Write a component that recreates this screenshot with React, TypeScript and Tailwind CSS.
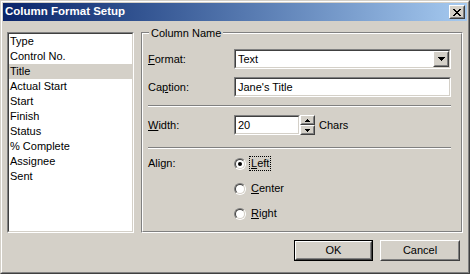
import React from 'react';

const items = ['Type', 'Control No.', 'Title', 'Actual Start', 'Start', 'Finish', 'Status', '% Complete', 'Assignee', 'Sent'];

const sunkenOuter = 'border border-t-[#808080] border-l-[#808080] border-b-white border-r-white';
const sunkenInner = 'border border-t-[#404040] border-l-[#404040] border-b-[#D4D0C8] border-r-[#D4D0C8]';
const raisedOuter = 'border border-t-white border-l-white border-b-[#404040] border-r-[#404040]';
const raisedInner = 'border border-t-[#D4D0C8] border-l-[#D4D0C8] border-b-[#808080] border-r-[#808080]';

const Field: React.FC<{ className?: string; children?: React.ReactNode }> = ({ className, children }) => (
  <div className={`${sunkenOuter} ${className || ''}`}>
    <div className={`${sunkenInner} bg-white h-full flex items-center`}>{children}</div>
  </div>
);

const RaisedBox: React.FC<{ className?: string; children?: React.ReactNode }> = ({ className, children }) => (
  <div className={`${raisedOuter} bg-[#D4D0C8] ${className || ''}`}>
    <div className={`${raisedInner} h-full flex items-center justify-center`}>{children}</div>
  </div>
);

const Separator = ({ className }: { className?: string }) => (
  <div className={`h-[2px] border-t border-t-[#808080] border-b border-b-white mr-[10px] ${className || ''}`} />
);

const Radio: React.FC<{ checked?: boolean; label: React.ReactNode; focused?: boolean }> = ({ checked, label, focused }) => (
  <div className="h-[25px] flex items-center">
    <div className="w-[12px] h-[12px] rounded-full border border-t-[#808080] border-l-[#808080] border-b-white border-r-white">
      <div className="w-full h-full rounded-full border border-t-[#404040] border-l-[#404040] border-b-[#D4D0C8] border-r-[#D4D0C8] bg-white flex items-center justify-center">
        {checked && <div className="w-[4px] h-[4px] rounded-full bg-black" />}
      </div>
    </div>
    <span className={`ml-[4px] px-[1px] leading-[13px] ${focused ? 'outline outline-1 outline-dotted outline-black' : ''}`}>{label}</span>
  </div>
);

export default function App() {
  return (
    <div
      className="w-[470px] h-[274px] bg-[#D4D0C8] border border-t-[#D4D0C8] border-l-[#D4D0C8] border-b-[#404040] border-r-[#404040] text-[11px] text-black select-none"
      style={{ fontFamily: '"Liberation Sans", Arial, sans-serif' }}
    >
      <div className="h-full border border-t-white border-l-white border-b-[#808080] border-r-[#808080] p-px flex flex-col">
        {/* Title bar */}
        <div className="h-[18px] bg-gradient-to-r from-[#0A246A] to-[#A6CAF0] flex items-center justify-between pl-[2px] pr-[2px]">
          <span className="text-white font-bold text-[11.5px] leading-none">Column Format Setup</span>
          <RaisedBox className="w-[16px] h-[14px]">
            <svg width="8" height="7" viewBox="0 0 8 7" shapeRendering="crispEdges">
              <path d="M0 0h2v1h-2zM6 0h2v1h-2zM1 1h2v1h-2zM5 1h2v1h-2zM2 2h4v1h-4zM3 3h2v1h-2zM2 4h4v1h-4zM1 5h2v1h-2zM5 5h2v1h-2zM0 6h2v1h-2zM6 6h2v1h-2z" fill="black" />
            </svg>
          </RaisedBox>
        </div>

        <div className="flex-1 flex flex-col px-[4px] pt-[11px]">
          <div className="flex gap-[7px] h-[201px]">
            {/* Field list */}
            <div className={`${sunkenOuter} w-[127px]`}>
              <div className={`${sunkenInner} bg-white h-full`}>
                {items.map((it) => (
                  <div key={it} className={`h-[15px] leading-[15px] pl-[1px] ${it === 'Title' ? 'bg-[#D4D0C8]' : ''}`}>
                    {it}
                  </div>
                ))}
              </div>
            </div>

            {/* Column name group */}
            <div className="flex-1 relative border border-t-[#808080] border-l-[#808080] border-b-white border-r-white">
              <div className="h-full border border-t-white border-l-white border-b-[#808080] border-r-[#808080] pl-[5px] flex flex-col">
                <span className="absolute left-[7px] top-[-6px] px-[2px] bg-[#D4D0C8] leading-[13px]">Column Name</span>

                <div className="mt-[15px] h-[20px] flex items-center">
                  <span className="w-[86px]"><span className="underline">F</span>ormat:</span>
                  <Field className="flex-1 mr-[10px] h-full">
                    <span className="flex-1 pl-[2px]">Text</span>
                    <RaisedBox className="w-[16px] h-full">
                      <svg width="7" height="4" viewBox="0 0 7 4" shapeRendering="crispEdges">
                        <path d="M0 0h7v1h-7zM1 1h5v1h-5zM2 2h3v1h-3zM3 3h1v1h-1z" fill="black" />
                      </svg>
                    </RaisedBox>
                  </Field>
                </div>

                <div className="mt-[8px] h-[20px] flex items-center">
                  <span className="w-[86px]">Ca<span className="underline">p</span>tion:</span>
                  <Field className="flex-1 mr-[10px] h-full">
                    <span className="pl-[2px]">Jane's Title</span>
                  </Field>
                </div>

                <Separator className="mt-[8px]" />

                <div className="mt-[8px] h-[20px] flex items-center">
                  <span className="w-[86px]"><span className="underline">W</span>idth:</span>
                  <Field className="w-[66px] h-full">
                    <span className="pl-[2px]">20</span>
                  </Field>
                  <div className="w-[15px] h-full flex flex-col">
                    <RaisedBox className="h-[10px]">
                      <svg width="5" height="3" viewBox="0 0 5 3" shapeRendering="crispEdges">
                        <path d="M2 0h1v1h-1zM1 1h3v1h-3zM0 2h5v1h-5z" fill="black" />
                      </svg>
                    </RaisedBox>
                    <RaisedBox className="h-[10px]">
                      <svg width="5" height="3" viewBox="0 0 5 3" shapeRendering="crispEdges">
                        <path d="M0 0h5v1h-5zM1 1h3v1h-3zM2 2h1v1h-1z" fill="black" />
                      </svg>
                    </RaisedBox>
                  </div>
                  <span className="ml-[4px]">Chars</span>
                </div>

                <Separator className="mt-[12px]" />

                <div className="mt-[2px] flex">
                  <span className="w-[86px] h-[25px] leading-[25px]">Align:</span>
                  <div className="flex flex-col">
                    <Radio checked focused label={<><span className="underline">L</span>eft</>} />
                    <Radio label={<><span className="underline">C</span>enter</>} />
                    <Radio label={<><span className="underline">R</span>ight</>} />
                  </div>
                </div>
              </div>
            </div>
          </div>

          {/* Buttons */}
          <div className="mt-[7px] flex justify-end gap-[7px] pr-[3px]">
            <div className="border border-black">
              <RaisedBox className="w-[77px] h-[19px]">OK</RaisedBox>
            </div>
            <RaisedBox className="w-[80px] h-[21px]">Cancel</RaisedBox>
          </div>
        </div>
      </div>
    </div>
  );
}
